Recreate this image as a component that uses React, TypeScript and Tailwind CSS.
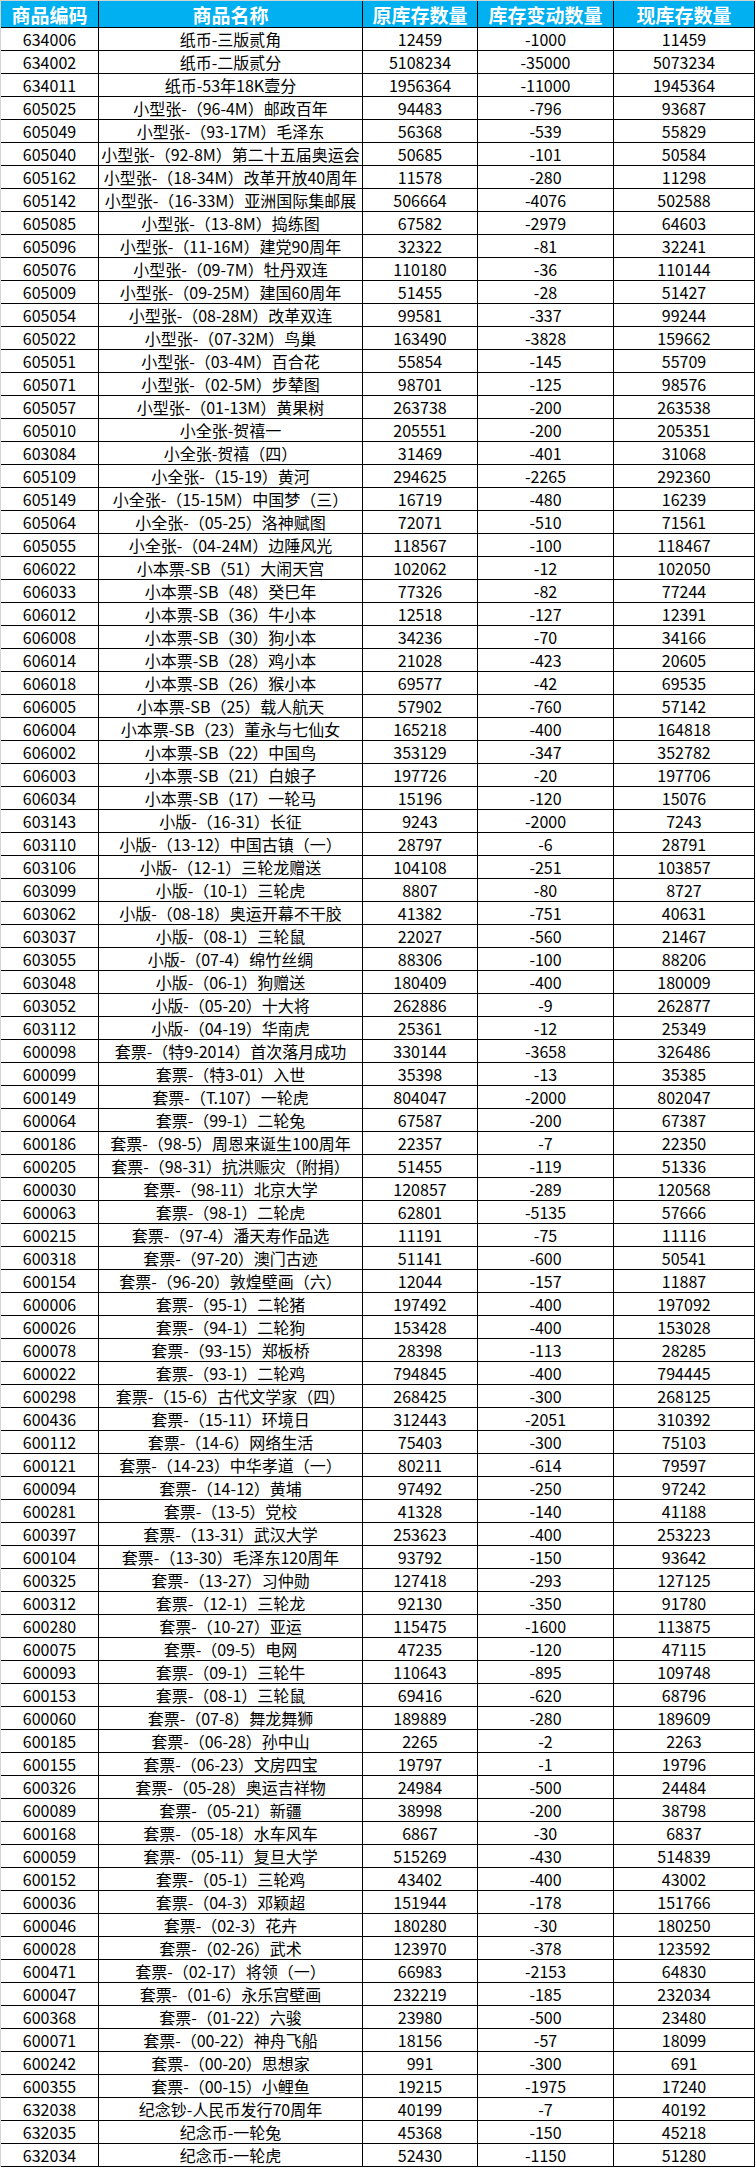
import React from "react";

const RAW = `634006|纸币-三版贰角|12459|-1000|11459
634002|纸币-二版贰分|5108234|-35000|5073234
634011|纸币-53年18K壹分|1956364|-11000|1945364
605025|小型张-（96-4M）邮政百年|94483|-796|93687
605049|小型张-（93-17M）毛泽东|56368|-539|55829
605040|小型张-（92-8M）第二十五届奥运会|50685|-101|50584
605162|小型张-（18-34M）改革开放40周年|11578|-280|11298
605142|小型张-（16-33M）亚洲国际集邮展|506664|-4076|502588
605085|小型张-（13-8M）捣练图|67582|-2979|64603
605096|小型张-（11-16M）建党90周年|32322|-81|32241
605076|小型张-（09-7M）牡丹双连|110180|-36|110144
605009|小型张-（09-25M）建国60周年|51455|-28|51427
605054|小型张-（08-28M）改革双连|99581|-337|99244
605022|小型张-（07-32M）鸟巢|163490|-3828|159662
605051|小型张-（03-4M）百合花|55854|-145|55709
605071|小型张-（02-5M）步辇图|98701|-125|98576
605057|小型张-（01-13M）黄果树|263738|-200|263538
605010|小全张-贺禧一|205551|-200|205351
603084|小全张-贺禧（四）|31469|-401|31068
605109|小全张-（15-19）黄河|294625|-2265|292360
605149|小全张-（15-15M）中国梦（三）|16719|-480|16239
605064|小全张-（05-25）洛神赋图|72071|-510|71561
605055|小全张-（04-24M）边陲风光|118567|-100|118467
606022|小本票-SB（51）大闹天宫|102062|-12|102050
606033|小本票-SB（48）癸巳年|77326|-82|77244
606012|小本票-SB（36）牛小本|12518|-127|12391
606008|小本票-SB（30）狗小本|34236|-70|34166
606014|小本票-SB（28）鸡小本|21028|-423|20605
606018|小本票-SB（26）猴小本|69577|-42|69535
606005|小本票-SB（25）载人航天|57902|-760|57142
606004|小本票-SB（23）董永与七仙女|165218|-400|164818
606002|小本票-SB（22）中国鸟|353129|-347|352782
606003|小本票-SB（21）白娘子|197726|-20|197706
606034|小本票-SB（17）一轮马|15196|-120|15076
603143|小版-（16-31）长征|9243|-2000|7243
603110|小版-（13-12）中国古镇（一）|28797|-6|28791
603106|小版-（12-1）三轮龙赠送|104108|-251|103857
603099|小版-（10-1）三轮虎|8807|-80|8727
603062|小版-（08-18）奥运开幕不干胶|41382|-751|40631
603037|小版-（08-1）三轮鼠|22027|-560|21467
603055|小版-（07-4）绵竹丝绸|88306|-100|88206
603048|小版-（06-1）狗赠送|180409|-400|180009
603052|小版-（05-20）十大将|262886|-9|262877
603112|小版-（04-19）华南虎|25361|-12|25349
600098|套票-（特9-2014）首次落月成功|330144|-3658|326486
600099|套票-（特3-01）入世|35398|-13|35385
600149|套票-（T.107）一轮虎|804047|-2000|802047
600064|套票-（99-1）二轮兔|67587|-200|67387
600186|套票-（98-5）周恩来诞生100周年|22357|-7|22350
600205|套票-（98-31）抗洪赈灾（附捐）|51455|-119|51336
600030|套票-（98-11）北京大学|120857|-289|120568
600063|套票-（98-1）二轮虎|62801|-5135|57666
600215|套票-（97-4）潘天寿作品选|11191|-75|11116
600318|套票-（97-20）澳门古迹|51141|-600|50541
600154|套票-（96-20）敦煌壁画（六）|12044|-157|11887
600006|套票-（95-1）二轮猪|197492|-400|197092
600026|套票-（94-1）二轮狗|153428|-400|153028
600078|套票-（93-15）郑板桥|28398|-113|28285
600022|套票-（93-1）二轮鸡|794845|-400|794445
600298|套票-（15-6）古代文学家（四）|268425|-300|268125
600436|套票-（15-11）环境日|312443|-2051|310392
600112|套票-（14-6）网络生活|75403|-300|75103
600121|套票-（14-23）中华孝道（一）|80211|-614|79597
600094|套票-（14-12）黄埔|97492|-250|97242
600281|套票-（13-5）党校|41328|-140|41188
600397|套票-（13-31）武汉大学|253623|-400|253223
600104|套票-（13-30）毛泽东120周年|93792|-150|93642
600325|套票-（13-27）习仲勋|127418|-293|127125
600312|套票-（12-1）三轮龙|92130|-350|91780
600280|套票-（10-27）亚运|115475|-1600|113875
600075|套票-（09-5）电网|47235|-120|47115
600093|套票-（09-1）三轮牛|110643|-895|109748
600153|套票-（08-1）三轮鼠|69416|-620|68796
600060|套票-（07-8）舞龙舞狮|189889|-280|189609
600185|套票-（06-28）孙中山|2265|-2|2263
600155|套票-（06-23）文房四宝|19797|-1|19796
600326|套票-（05-28）奥运吉祥物|24984|-500|24484
600089|套票-（05-21）新疆|38998|-200|38798
600168|套票-（05-18）水车风车|6867|-30|6837
600059|套票-（05-11）复旦大学|515269|-430|514839
600152|套票-（05-1）三轮鸡|43402|-400|43002
600036|套票-（04-3）邓颖超|151944|-178|151766
600046|套票-（02-3）花卉|180280|-30|180250
600028|套票-（02-26）武术|123970|-378|123592
600471|套票-（02-17）将领（一）|66983|-2153|64830
600047|套票-（01-6）永乐宫壁画|232219|-185|232034
600368|套票-（01-22）六骏|23980|-500|23480
600071|套票-（00-22）神舟飞船|18156|-57|18099
600242|套票-（00-20）思想家|991|-300|691
600355|套票-（00-15）小鲤鱼|19215|-1975|17240
632038|纪念钞-人民币发行70周年|40199|-7|40192
632035|纪念币-一轮兔|45368|-150|45218
632034|纪念币-一轮虎|52430|-1150|51280`;

const rows = RAW.split("\n").map((l) => l.split("|"));
const headers = ["商品编码", "商品名称", "原库存数量", "库存变动数量", "现库存数量"];

const font = { fontFamily: '"Noto Sans CJK SC", "Noto Sans", sans-serif' };

export default function App() {
  return (
    <div className="w-[756px] bg-white" style={font}>
      <div className="w-[755px] border-l border-t border-[#d4d4d4]">
        <div className="grid grid-cols-[98px_264px_115px_136px_141px] h-[27px] bg-[#00b0f0]">
          {headers.map((h) => (
            <div
              key={h}
              className="flex items-center justify-center border-r border-b border-black text-white font-bold text-[19px] leading-none whitespace-nowrap overflow-hidden"
            >
              {h}
            </div>
          ))}
        </div>
        {rows.map((r, i) => (
          <div key={i} className="grid grid-cols-[98px_264px_115px_136px_141px] h-[23px]">
            {r.map((c, j) => (
              <div
                key={j}
                className="flex items-center justify-center border-r border-b border-black text-black text-[16px] leading-none whitespace-nowrap overflow-hidden"
              >
                <span className="shrink-0">{c}</span>
              </div>
            ))}
          </div>
        ))}
      </div>
    </div>
  );
}
